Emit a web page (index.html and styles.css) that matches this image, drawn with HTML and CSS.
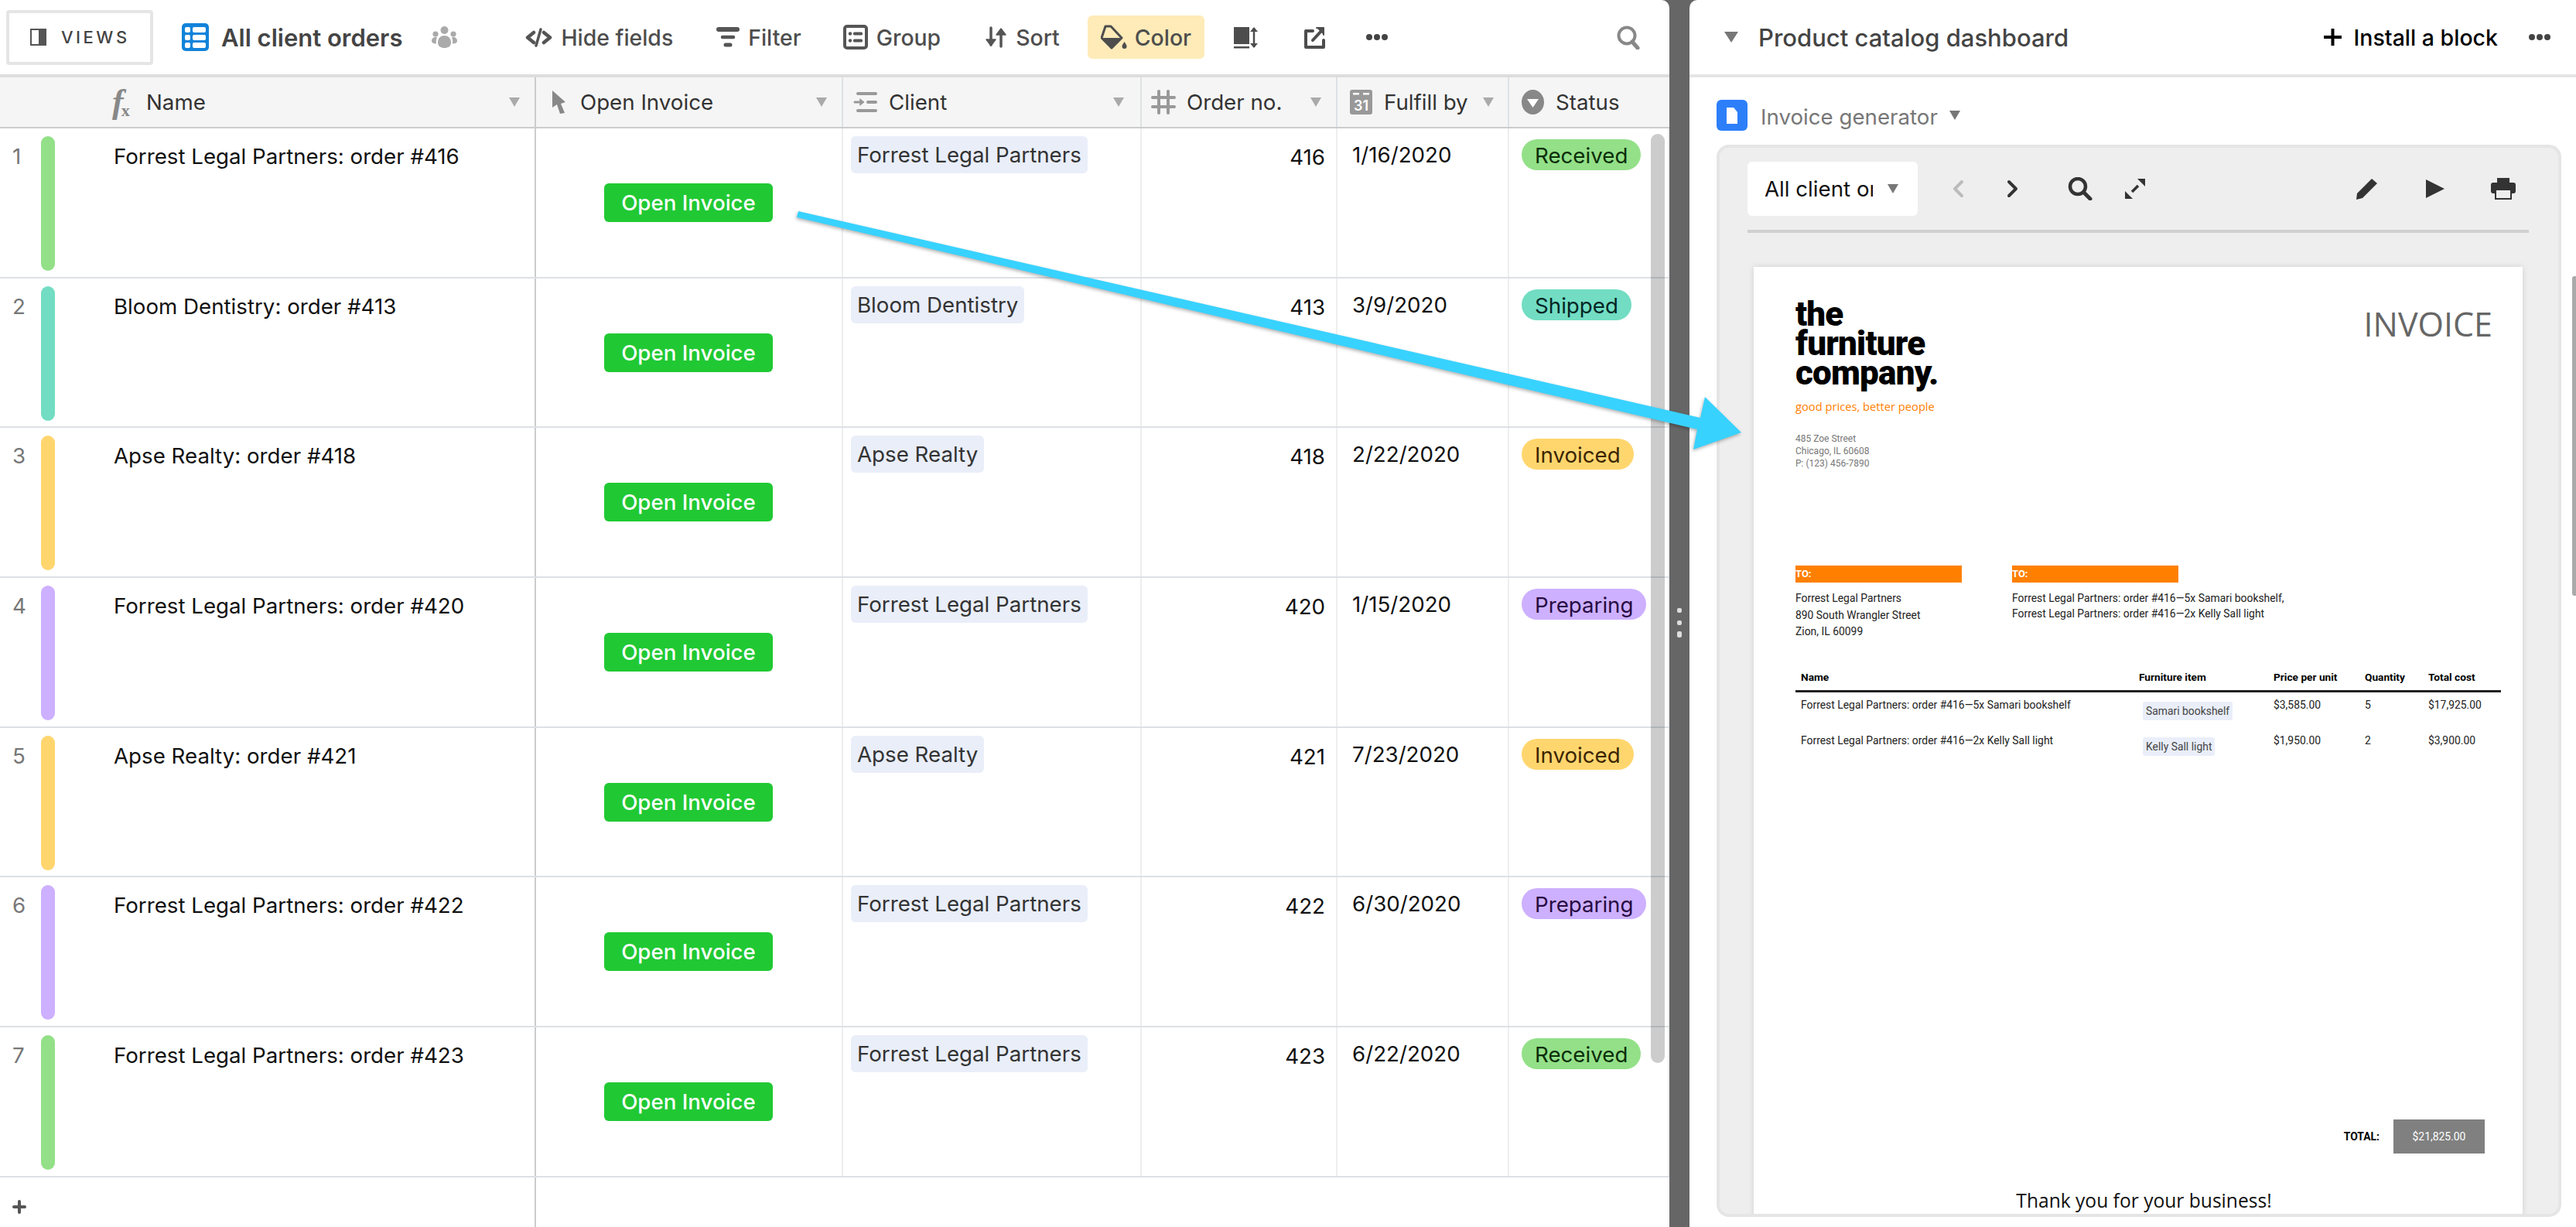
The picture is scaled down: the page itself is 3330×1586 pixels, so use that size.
FILE: index.html
```html
<!DOCTYPE html>
<html lang="en">
<head>
    <meta charset="UTF-8">
    <meta name="viewport" content="width=device-width, initial-scale=1.0">
    <title>All client orders</title>
    <link rel="stylesheet" href="styles.css">
</head>
<body>
    <!-- Grid side -->
    <div class="grid-pane">
        <header class="toolbar">
            <div class="views-btn">
                <svg width="21" height="22" viewBox="0 0 21 22"><rect x="1" y="1" width="19" height="20" fill="#fff" stroke="#555" stroke-width="2"/><rect x="11" y="1" width="9" height="20" fill="#555"/></svg>
                <span>VIEWS</span>
            </div>
            <svg class="tb-table" width="35" height="36" viewBox="0 0 35 36"><rect width="35" height="36" rx="5" fill="#1283da"/><g fill="#fff"><rect x="4" y="5" width="7" height="7" rx="2"/><rect x="14" y="5" width="17" height="7" rx="2"/><rect x="4" y="15" width="7" height="7" rx="2"/><rect x="14" y="15" width="17" height="7" rx="2"/><rect x="4" y="25" width="7" height="7" rx="2"/><rect x="14" y="25" width="17" height="7" rx="2"/></g></svg>
            <h1 class="tb-title">All client orders</h1>
            <svg class="tb-people" width="35" height="28" viewBox="0 0 35 28"><g fill="#aaa"><circle cx="17.500" cy="5" r="5"/><circle cx="6" cy="10" r="3.600"/><circle cx="29" cy="10" r="3.600"/><path d="M9 21c0-6 4-9 8.500-9s8.500 3 8.500 9c0 5-4 7-8.500 7S9 26 9 21z"/><path d="M1 19c0-3 2-5 5-5 1.500 0 2 .5 2 .5-1 2-1.500 4-1 8-3 0-6-1-6-3.500z"/><path d="M34 19c0-3-2-5-5-5-1.500 0-2 .5-2 .5 1 2 1.500 4 1 8 3 0 6-1 6-3.500z"/></g></svg>

            <div class="tb-item tb-hide">
                <svg width="35" height="25" viewBox="0 0 35 25" fill="none" stroke="#555" stroke-width="4.500" stroke-linecap="round" stroke-linejoin="round"><path d="M11 6 3 12.500 11 19"/><path d="M24 6l8 6.500-8 6.500"/><path d="M20 2 14 23" stroke-width="3.500"/></svg>
                <span>Hide fields</span>
            </div>
            <div class="tb-item tb-filter">
                <svg width="30" height="28" viewBox="0 0 30 28" fill="none" stroke="#555" stroke-linecap="round"><path d="M3 4h24" stroke-width="6"/><path d="M8 14h14" stroke-width="4.500"/><path d="M12 24h6" stroke-width="5"/></svg>
                <span>Filter</span>
            </div>
            <div class="tb-item tb-group">
                <svg width="32" height="32" viewBox="0 0 32 32"><rect x="2" y="2" width="28" height="28" rx="3" fill="none" stroke="#555" stroke-width="4"/><g fill="#555"><circle cx="9" cy="11.500" r="2.200"/><circle cx="9" cy="20.500" r="2.200"/><rect x="13" y="9.500" width="12" height="4" rx="1.500"/><rect x="13" y="18.500" width="12" height="4" rx="1.500"/></g></svg>
                <span>Group</span>
            </div>
            <div class="tb-item tb-sort">
                <svg width="29" height="28" viewBox="0 0 29 28" fill="none" stroke="#555" stroke-width="3.500" stroke-linecap="round" stroke-linejoin="round"><path d="M8 2v22"/><path d="M2 17l6 8 6-8z" fill="#555" stroke-width="1.500"/><path d="M21 26V6"/><path d="M15 11l6-8 6 8z" fill="#555" stroke-width="1.500"/></svg>
                <span>Sort</span>
            </div>
            <div class="tb-color">
                <svg width="34" height="32" viewBox="0 0 34 32"><path d="M6 2h7l14 15-13 13L1 17z" fill="none" stroke="#4d4d4d" stroke-width="3" stroke-linejoin="round"/><path d="M1 17h26L14 31z" fill="#4d4d4d"/><path d="M30.500 22c2 3 3 4.500 3 6a3 3 0 0 1-6 0c0-1.500 1-3 3-6z" fill="#4d4d4d"/></svg>
                <span>Color</span>
            </div>
            <svg class="tb-height" width="32" height="29" viewBox="0 0 32 29"><rect x="0" y="1" width="20" height="22" fill="#4d4d4d"/><rect x="0" y="26" width="20" height="2.500" fill="#4d4d4d"/><path d="M26 2v25" stroke="#4d4d4d" stroke-width="2.500"/><path d="M21 7l5-6 5 6zM21 22l5 6 5-6z" fill="#4d4d4d"/></svg>
            <svg class="tb-share" width="27" height="29" viewBox="0 0 27 29" fill="none" stroke="#4d4d4d" stroke-width="4" stroke-linecap="round" stroke-linejoin="round"><path d="M11 6H2v21h23v-9"/><path d="M11 18 23 5"/><path d="M16 2h9v9" fill="#4d4d4d" stroke-width="2"/></svg>
            <div class="dots tb-dots"><i></i><i></i><i></i></div>
            <svg class="tb-search" width="30" height="31" viewBox="0 0 30 31" fill="none" stroke="#888" stroke-width="4" stroke-linecap="round"><circle cx="13" cy="13" r="10.500"/><path d="M20 21l7 8" stroke-width="5"/></svg>
        </header>

        <div class="field-row">
            <div class="fhead fhead-name"><span class="fx">f<sub>x</sub></span><span>Name</span><i class="caret"></i></div>
            <div class="fhead fhead-open">
                <svg width="19" height="30" viewBox="0 0 19 30"><path d="M1 0l17 15-6 2 5 12-6 1-4-12-6 4z" fill="#888"/></svg>
                <span>Open Invoice</span><i class="caret"></i>
            </div>
            <div class="fhead fhead-client">
                <svg width="31" height="28" viewBox="0 0 31 28" fill="none" stroke="#999" stroke-width="4" stroke-linecap="round"><path d="M6 3h23"/><path d="M19 14h10"/><path d="M6 25h23"/><path d="M2 14h8" stroke-width="3"/><path d="M9 10l5 4-5 4z" fill="#999" stroke-width="1"/></svg>
                <span>Client</span><i class="caret"></i>
            </div>
            <div class="fhead fhead-order">
                <svg width="32" height="32" viewBox="0 0 32 32" fill="none" stroke="#999" stroke-width="4" stroke-linecap="round"><path d="M10 2v28"/><path d="M22 2v28"/><path d="M2 10h28"/><path d="M2 22h28"/></svg>
                <span>Order no.</span><i class="caret"></i>
            </div>
            <div class="fhead fhead-date">
                <svg width="29" height="32" viewBox="0 0 29 32"><rect width="29" height="32" rx="3" fill="#999"/><rect x="4" y="4" width="8" height="2.500" fill="#fff"/><rect x="17" y="4" width="8" height="2.500" fill="#fff"/><text x="14.500" y="27" font-size="18" font-family="Inter" font-weight="600" fill="#fff" text-anchor="middle">31</text></svg>
                <span>Fulfill by</span><i class="caret"></i>
            </div>
            <div class="fhead fhead-status">
                <svg width="29" height="32" viewBox="0 0 29 32"><ellipse cx="14.500" cy="16" rx="14.500" ry="16" fill="#888"/><path d="M7 12h15l-7.500 11z" fill="#fff"/></svg>
                <span>Status</span>
            </div>
        </div>

        <div class="row">
            <div class="cell cell-name"><span class="num">1</span><i class="bar green"></i><p>Forrest Legal Partners: order #416</p></div>
            <div class="cell cell-open"><a class="open-btn">Open Invoice</a></div>
            <div class="cell"><span class="client">Forrest Legal Partners</span></div>
            <div class="cell cell-order">416</div>
            <div class="cell cell-date">1/16/2020</div>
            <div class="cell cell-status"><span class="status green">Received</span></div>
        </div>
        <div class="row">
            <div class="cell cell-name"><span class="num">2</span><i class="bar teal"></i><p>Bloom Dentistry: order #413</p></div>
            <div class="cell cell-open"><a class="open-btn">Open Invoice</a></div>
            <div class="cell"><span class="client">Bloom Dentistry</span></div>
            <div class="cell cell-order">413</div>
            <div class="cell cell-date">3/9/2020</div>
            <div class="cell cell-status"><span class="status teal">Shipped</span></div>
        </div>
        <div class="row">
            <div class="cell cell-name"><span class="num">3</span><i class="bar yellow"></i><p>Apse Realty: order #418</p></div>
            <div class="cell cell-open"><a class="open-btn">Open Invoice</a></div>
            <div class="cell"><span class="client">Apse Realty</span></div>
            <div class="cell cell-order">418</div>
            <div class="cell cell-date">2/22/2020</div>
            <div class="cell cell-status"><span class="status yellow">Invoiced</span></div>
        </div>
        <div class="row">
            <div class="cell cell-name"><span class="num">4</span><i class="bar purple"></i><p>Forrest Legal Partners: order #420</p></div>
            <div class="cell cell-open"><a class="open-btn">Open Invoice</a></div>
            <div class="cell"><span class="client">Forrest Legal Partners</span></div>
            <div class="cell cell-order">420</div>
            <div class="cell cell-date">1/15/2020</div>
            <div class="cell cell-status"><span class="status purple">Preparing</span></div>
        </div>
        <div class="row">
            <div class="cell cell-name"><span class="num">5</span><i class="bar yellow"></i><p>Apse Realty: order #421</p></div>
            <div class="cell cell-open"><a class="open-btn">Open Invoice</a></div>
            <div class="cell"><span class="client">Apse Realty</span></div>
            <div class="cell cell-order">421</div>
            <div class="cell cell-date">7/23/2020</div>
            <div class="cell cell-status"><span class="status yellow">Invoiced</span></div>
        </div>
        <div class="row">
            <div class="cell cell-name"><span class="num">6</span><i class="bar purple"></i><p>Forrest Legal Partners: order #422</p></div>
            <div class="cell cell-open"><a class="open-btn">Open Invoice</a></div>
            <div class="cell"><span class="client">Forrest Legal Partners</span></div>
            <div class="cell cell-order">422</div>
            <div class="cell cell-date">6/30/2020</div>
            <div class="cell cell-status"><span class="status purple">Preparing</span></div>
        </div>
        <div class="row">
            <div class="cell cell-name"><span class="num">7</span><i class="bar green"></i><p>Forrest Legal Partners: order #423</p></div>
            <div class="cell cell-open"><a class="open-btn">Open Invoice</a></div>
            <div class="cell"><span class="client">Forrest Legal Partners</span></div>
            <div class="cell cell-order">423</div>
            <div class="cell cell-date">6/22/2020</div>
            <div class="cell cell-status"><span class="status green">Received</span></div>
        </div>

        <div class="add-row">
            <div class="add-cell">
                <svg width="18" height="18" viewBox="0 0 18 18" fill="none" stroke="#555" stroke-width="4" stroke-linecap="round"><path d="M9 2v14"/><path d="M2 9h14"/></svg>
            </div>
        </div>
        <div class="grid-scroll"></div>
    </div>

    <div class="splitter"><i></i><i></i><i class="tall"></i></div>

    <!-- Dashboard side -->
    <aside class="side-pane">
        <header class="side-head">
            <i class="caret dark"></i>
            <h2>Product catalog dashboard</h2>
            <svg class="side-plus" width="23" height="24" viewBox="0 0 23 24" fill="none" stroke="#000" stroke-width="4"><path d="M11.500 1v22"/><path d="M0 12h23"/></svg>
            <span class="side-install">Install a block</span>
            <div class="dots side-dots"><i></i><i></i><i></i></div>
        </header>

        <div class="block-title">
            <svg width="40" height="40" viewBox="0 0 40 40"><rect width="40" height="40" rx="6" fill="#2d7ff9"/><path d="M13 10h9l5 6v15H13z" fill="#fff"/></svg>
            <span>Invoice generator</span>
            <i class="caret mid"></i>
        </div>

        <div class="block">
            <div class="block-bar">
                <div class="select"><span class="select-text">All client orders</span><i class="caret mid"></i></div>
                <svg class="bb-prev" width="15" height="24" viewBox="0 0 15 24" fill="none" stroke="#bbb" stroke-width="4" stroke-linecap="round" stroke-linejoin="round"><path d="M12 3 3 12l9 9"/></svg>
                <svg class="bb-next" width="15" height="24" viewBox="0 0 15 24" fill="none" stroke="#333" stroke-width="4" stroke-linecap="round" stroke-linejoin="round"><path d="M3 3l9 9-9 9"/></svg>
                <svg class="bb-search" width="32" height="30" viewBox="0 0 32 30" fill="none" stroke="#333" stroke-width="4.500" stroke-linecap="round"><circle cx="13" cy="12" r="10"/><path d="M21 20l8 8" stroke-width="5"/></svg>
                <svg class="bb-expand" width="28" height="28" viewBox="0 0 28 28" fill="none" stroke="#333" stroke-width="3.500"><path d="M18 10 10 18"/><path d="M17 1h10v10z" fill="#333" stroke="none"/><path d="M1 17v10h10z" fill="#333" stroke="none"/></svg>
                <svg class="bb-edit" width="29" height="29" viewBox="0 0 29 29"><path d="M21 1l7 6L9 26l-8 2 1-8z" fill="#333"/></svg>
                <svg class="bb-play" width="24" height="24" viewBox="0 0 24 24"><path d="M0 0l24 12L0 24z" fill="#333"/></svg>
                <svg class="bb-print" width="32" height="28" viewBox="0 0 32 28"><path d="M8 0h16v6H8z" fill="#333"/><rect y="6" width="32" height="14" rx="3" fill="#333"/><rect x="6" y="15" width="20" height="12" fill="#eee" stroke="#333" stroke-width="2"/></svg>
            </div>
            <div class="block-rule"></div>

            <!-- Invoice page preview -->
            <div class="paper">
                <div class="inv-top">
                    <div>
                        <div class="logo">the<br>furniture<br>company.</div>
                        <p class="tagline">good prices, better people</p>
                        <p class="addr">485 Zoe Street<br>Chicago, IL 60608<br>P: (123) 456-7890</p>
                    </div>
                    <div class="inv-word">INVOICE</div>
                </div>

                <div class="inv-to">
                    <div class="to-col">
                        <div class="to-bar">TO:</div>
                        <p class="to-first">Forrest Legal Partners</p>
                        <p class="to-line">890 South Wrangler Street</p>
                        <p class="to-line">Zion, IL 60099</p>
                    </div>
                    <div class="to-col">
                        <div class="to-bar">TO:</div>
                        <p class="to-first">Forrest Legal Partners: order #416—5x Samari bookshelf,</p>
                        <p class="to-next">Forrest Legal Partners: order #416—2x Kelly Sall light</p>
                    </div>
                </div>

                <div class="inv-row inv-head">
                    <div>Name</div><div>Furniture item</div><div>Price per unit</div><div>Quantity</div><div>Total cost</div>
                </div>
                <div class="inv-row">
                    <div>Forrest Legal Partners: order #416—5x Samari bookshelf</div><div><span class="inv-tag">Samari bookshelf</span></div><div>$3,585.00</div><div>5</div><div>$17,925.00</div>
                </div>
                <div class="inv-row">
                    <div>Forrest Legal Partners: order #416—2x Kelly Sall light</div><div><span class="inv-tag">Kelly Sall light</span></div><div>$1,950.00</div><div>2</div><div>$3,900.00</div>
                </div>

                <div class="inv-total">
                    <span class="total-label">TOTAL:</span>
                    <span class="total-box">$21,825.00</span>
                </div>
                <p class="thanks">Thank you for your business!</p>
            </div>
        </div>
        <div class="side-scroll"></div>
    </aside>

    <!-- Callout arrow drawn over the screenshot -->
    <svg class="callout" width="3330" height="1586" viewBox="0 0 3330 1586"><path d="M1032 273 2198 540 2204 513 2251 559 2189 581 2194 555 1030 281z" fill="#38d2ff"/></svg>
</body>
</html>
```

FILE: styles.css
```css
/* General Reset */
* {
    margin: 0;
    padding: 0;
    box-sizing: border-box;
}

body {
    display: flex;
    height: 100vh;
    overflow: hidden;
    font-family: Inter, "Liberation Sans", sans-serif;
    font-size: 27.700px;
    color: #111;
    background-color: #666;
}

i {
    display: block;
}

.caret {
    width: 0;
    height: 0;
    flex: none;
    border-left: 7px solid transparent;
    border-right: 7px solid transparent;
    border-top: 12px solid #aaa;
}

.caret.mid {
    border-top-color: #777;
}

.caret.dark {
    border-left-width: 9px;
    border-right-width: 9px;
    border-top: 14px solid #777;
}

.dots {
    display: flex;
    gap: 2px;
}

.dots i {
    width: 8px;
    height: 8px;
    border-radius: 50%;
    background-color: #444;
}

/* Grid side */
.grid-pane {
    position: relative;
    display: flex;
    flex-direction: column;
    width: 2158px;
    flex: none;
    background-color: white;
    border-top-right-radius: 10px;
    overflow: hidden;
}

.toolbar {
    display: flex;
    align-items: center;
    height: 96px;
    flex: none;
    padding: 0 38px 0 8px;
    color: #4d4d4d;
}

.views-btn {
    display: flex;
    align-items: center;
    gap: 19px;
    width: 190px;
    height: 71px;
    padding-left: 27px;
    border: 4px solid #e5e5e5;
    border-radius: 4px;
    font-size: 22px;
    font-weight: 500;
    letter-spacing: 3.500px;
    color: #444;
}

.tb-table {
    margin-left: 37px;
}

.tb-title {
    margin-left: 16px;
    font-size: 31px;
    font-weight: 600;
    color: #444;
}

.tb-people {
    margin-left: 37px;
}

.tb-item {
    display: flex;
    align-items: center;
    gap: 11px;
    font-size: 28.400px;
    font-weight: 500;
}

.tb-hide {
    margin-left: 87px;
}

.tb-filter {
    margin-left: 56px;
}

.tb-group {
    margin-left: 54px;
}

.tb-sort {
    margin-left: 57px;
}

.tb-color {
    display: flex;
    align-items: center;
    gap: 10px;
    height: 56px;
    margin-left: 36px;
    padding: 0 17px;
    background-color: #feebb8;
    border-radius: 6px;
    font-size: 28.400px;
    font-weight: 500;
}

.tb-height {
    margin-left: 38px;
}

.tb-share {
    margin-left: 59px;
}

.tb-dots {
    margin-left: 53px;
}

.tb-search {
    margin-left: auto;
}

/* Field header */
.field-row,
.row {
    display: grid;
    grid-template-columns: 693px 397px 386px 253px 222px 207px;
    flex: none;
}

.field-row {
    height: 70px;
    background-color: #f5f5f5;
    border-top: 4px solid #ddd;
    border-bottom: 2px solid #ccc;
}

.fhead {
    display: flex;
    align-items: center;
    gap: 12px;
    border-right: 2px solid #dde1e5;
    color: #333;
}

.fhead-name {
    padding: 0 19px 0 145px;
    border-right-color: #ccc;
}

.fhead-open {
    padding: 0 19px 0 20px;
    gap: 18px;
}

.fhead-client {
    padding: 0 21px 0 13px;
    gap: 15px;
}

.fhead-order {
    padding: 0 19px 0 12px;
    gap: 14px;
}

.fhead-date {
    padding: 0 18px 0 16px;
    gap: 15px;
}

.fhead-status {
    padding-left: 16px;
    gap: 15px;
    border-right: 0;
}

.fhead .caret {
    margin-left: auto;
}

.fx {
    width: 32px;
    font-family: "Liberation Serif", serif;
    font-style: italic;
    font-weight: 700;
    font-size: 44px;
    line-height: 1;
    color: #888;
}

.fx sub {
    font-size: 22px;
    font-style: normal;
    vertical-align: -4px;
    margin-left: -3px;
}

/* Records */
.row {
    height: 193.700px;
    border-bottom: 2px solid #dde1e5;
}

.cell {
    padding: 10px 0 0 10px;
    border-right: 2px solid #eee;
}

.cell-name {
    display: flex;
    padding: 10px 0 0 0;
    border-right-color: #ccc;
}

.num {
    width: 53px;
    flex: none;
    padding: 13px 0 0 16px;
    line-height: 26px;
    color: #777;
}

.bar {
    width: 18px;
    height: 174px;
    flex: none;
    border-radius: 9px;
}

.cell-name p {
    padding: 11px 0 0 76px;
    line-height: 30px;
}

.green {
    background-color: #93e088;
    color: #0b2e08;
}

.teal {
    background-color: #72ddc3;
    color: #012524;
}

.yellow {
    background-color: #ffd66e;
    color: #3b2501;
}

.purple {
    background-color: #cdb0ff;
    color: #280b42;
}

.cell-open {
    display: flex;
    align-items: center;
    justify-content: center;
    padding: 0;
}

.open-btn {
    display: block;
    width: 218px;
    height: 50px;
    margin-left: -1px;
    background-color: #20c933;
    border-radius: 6px;
    text-align: center;
    line-height: 50px;
    font-weight: 500;
    color: white;
}

.client {
    display: inline-block;
    height: 48px;
    padding: 0 8px;
    background-color: #e9eef9;
    border-radius: 6px;
    line-height: 48px;
    color: #333;
}

.cell-order {
    padding: 22px 14px 0 0;
    text-align: right;
    line-height: 30px;
}

.cell-date {
    padding: 19px 0 0 19px;
    line-height: 30px;
}

.cell-status {
    padding: 14px 0 0 16px;
}

.status {
    display: inline-block;
    height: 40px;
    padding: 0 17px;
    border-radius: 20px;
    line-height: 42px;
}

.add-row {
    flex: 1;
}

.add-cell {
    width: 693px;
    height: 100%;
    padding: 20px 0 0 16px;
    border-right: 2px solid #ccc;
}

.grid-scroll {
    position: absolute;
    top: 173px;
    left: 2134px;
    width: 18px;
    height: 1201px;
    background-color: rgba(0, 0, 0, 0.2);
    border-radius: 9px;
}

/* Splitter */
.splitter {
    display: flex;
    flex-direction: column;
    align-items: center;
    justify-content: center;
    gap: 10px;
    width: 26px;
    flex: none;
    padding-top: 24px;
}

.splitter i {
    width: 6px;
    height: 6px;
    border-radius: 2px;
    background-color: #ddd;
}

.splitter i.tall {
    height: 8px;
    margin-top: -2px;
}

/* Dashboard side */
.side-pane {
    position: relative;
    display: flex;
    flex-direction: column;
    flex: 1;
    min-width: 0;
    background-color: white;
    border-top-left-radius: 10px;
    overflow: hidden;
}

.side-head {
    display: flex;
    align-items: center;
    height: 100px;
    flex: none;
    padding: 0 33px 0 45px;
    border-bottom: 4px solid #e5e5e5;
}

.side-head h2 {
    margin-left: 26px;
    font-size: 31px;
    font-weight: 500;
    color: #444;
}

.side-plus {
    margin-left: auto;
}

.side-install {
    margin-left: 16px;
    font-weight: 500;
    font-size: 28.500px;
    color: #000;
}

.side-dots {
    margin-left: 40px;
}

.block-title {
    display: flex;
    align-items: center;
    gap: 17px;
    height: 40px;
    flex: none;
    margin: 29px 0 18px 35px;
    color: #777;
}

.block-title span {
    padding-top: 4px;
}

.block-title .caret {
    margin-left: -2px;
}

.block {
    flex: 1;
    min-height: 0;
    margin: 0 19px 13px 35px;
    padding: 18px 38px 0 36px;
    background-color: #eee;
    border: 4px solid #e5e5e5;
    border-radius: 16px;
    overflow: hidden;
}

.block-bar {
    display: flex;
    align-items: center;
    height: 70px;
}

.select {
    display: flex;
    align-items: center;
    gap: 19px;
    width: 220px;
    height: 70px;
    padding-left: 22px;
    background-color: white;
    border-radius: 6px;
}

.select-text {
    width: 140px;
    overflow: hidden;
    white-space: nowrap;
}

.bb-prev {
    margin-left: 45px;
}

.bb-next {
    margin-left: 55px;
}

.bb-search {
    margin-left: 64px;
}

.bb-expand {
    margin-left: 41px;
}

.bb-edit {
    margin-left: auto;
}

.bb-play {
    margin-left: 62px;
}

.bb-print {
    margin-left: 60px;
    margin-right: 17px;
}

.block-rule {
    height: 4px;
    margin-top: 18px;
    background-color: #d0d0d0;
}

/* Invoice page preview */
.paper {
    height: 1300px;
    margin: 44px 8px 0;
    padding: 42px 28px 0 54px;
    background-color: white;
    box-shadow: 0 0 8px rgba(0, 0, 0, 0.12);
    font-family: Roboto, sans-serif;
    font-size: 13.900px;
}

.inv-top {
    display: flex;
    justify-content: space-between;
}

.logo {
    font-size: 44px;
    font-weight: 900;
    line-height: 38px;
    letter-spacing: -0.800px;
    color: black;
}

.tagline {
    margin-top: 14px;
    font-family: "Open Sans", sans-serif;
    font-size: 14.700px;
    color: #ff8000;
}

.addr {
    margin-top: 24px;
    font-size: 12px;
    line-height: 16px;
    color: #777;
}

.inv-word {
    margin: 2px 11px 0 0;
    font-family: "Open Sans", sans-serif;
    font-size: 43px;
    line-height: 60px;
    color: #666;
}

.inv-to {
    display: flex;
    gap: 65px;
    margin-top: 124px;
    height: 134px;
}

.to-col {
    width: 215px;
    white-space: nowrap;
    line-height: 20px;
    color: #222;
}

.to-bar {
    height: 22px;
    margin-bottom: 10px;
    background-color: #ff8000;
    font-weight: 700;
    font-size: 13px;
    line-height: 22px;
    color: white;
}

.to-line {
    margin-top: 1px;
}

.to-first + .to-line {
    margin-top: 2px;
}

.inv-row {
    display: grid;
    grid-template-columns: 437px 174px 118px 82px 101px;
    height: 46px;
    line-height: 20px;
    color: #222;
}

.inv-row > div {
    padding-left: 7px;
    white-space: nowrap;
}

.inv-head {
    height: 30px;
    margin-bottom: 6px;
    border-bottom: 3px solid #222;
    font-size: 13.700px;
    font-weight: 700;
    color: black;
}

.inv-tag {
    display: inline-block;
    height: 24px;
    margin: 6px 0 0 5px;
    padding: 0 4px;
    background-color: #e9eef9;
    border-radius: 3px;
    line-height: 24px;
    color: #444;
}

.inv-total {
    display: flex;
    align-items: center;
    justify-content: flex-end;
    gap: 18px;
    margin: 454px 21px 0 0;
}

.total-label {
    font-weight: 700;
    color: black;
}

.total-box {
    width: 118px;
    height: 44px;
    background-color: #808080;
    text-align: center;
    line-height: 44px;
    color: white;
}

.thanks {
    margin-top: 44px;
    padding-right: 11px;
    text-align: center;
    font-family: "Open Sans", sans-serif;
    font-size: 24.600px;
    color: #111;
}

.side-scroll {
    position: absolute;
    top: 357px;
    right: 0;
    width: 5px;
    height: 413px;
    background-color: #aaa;
    border-radius: 3px 0 0 3px;
}

.callout {
    position: absolute;
    top: 0;
    left: 0;
    pointer-events: none;
    filter: drop-shadow(-1px 2px 2px rgba(0, 0, 0, 0.3));
}
```
